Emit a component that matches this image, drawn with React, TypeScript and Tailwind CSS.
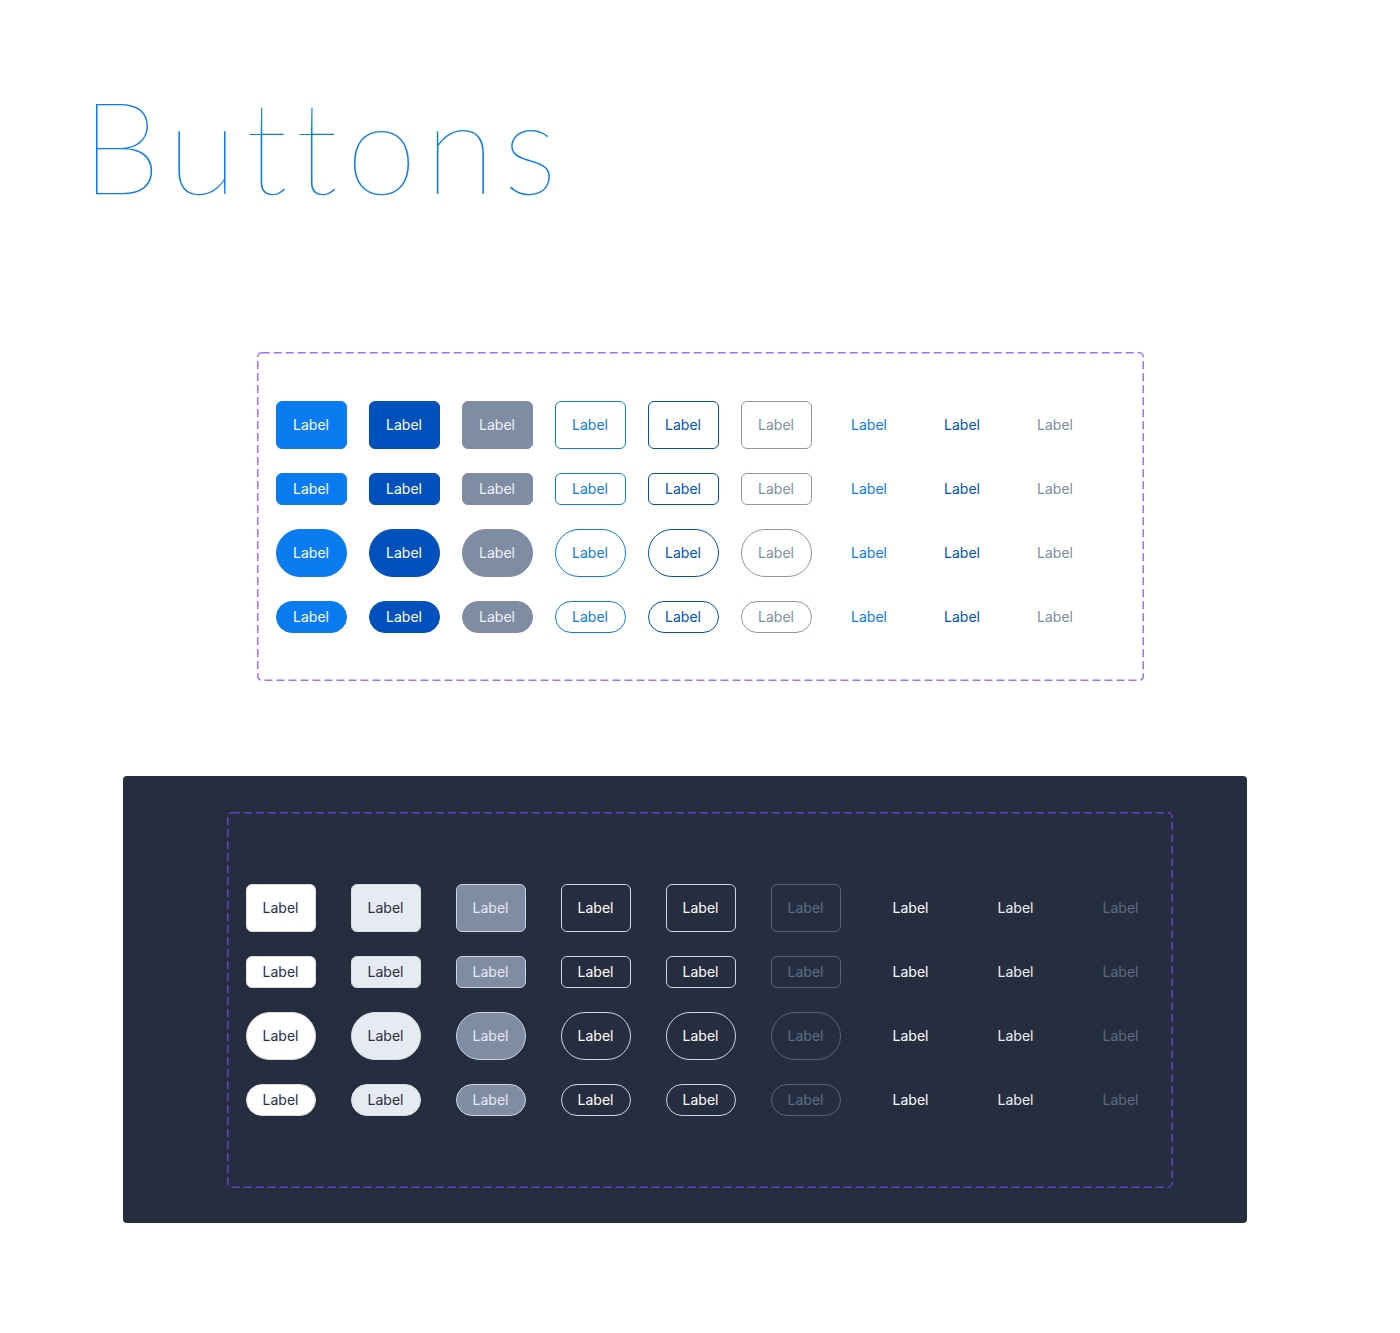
const shapes = [
  "h-12 rounded-md",
  "h-8 rounded-md",
  "h-12 rounded-full",
  "h-8 rounded-full",
];

const lightVariants = [
  "bg-[#0a7cf0] text-white border border-[#0a7cf0]",
  "bg-[#0050bd] text-white border border-[#0050bd]",
  "bg-[#7f8ca4] text-[#eef1f5] border border-[#7f8ca4]",
  "bg-white text-[#0a7cf0] border border-[#0a7cf0]",
  "bg-white text-[#0050bd] border border-[#0050bd]",
  "bg-white text-[#7f8ca4] border border-[#8b97ad]",
  "text-[#0a7cf0]",
  "text-[#0050bd]",
  "text-[#7f8ca4]",
];

const darkVariants = [
  "bg-white text-[#252e3f] border border-[#d9dde4]",
  "bg-[#e6eaf1] text-[#252e3f] border border-[#d9dde4]",
  "bg-[#7f8ca4] text-[#e6eaf1] border border-[#cfd5df]",
  "text-white border border-[#cfd5df]",
  "text-white border border-[#cfd5df]",
  "text-[#5f6c84] border border-[#56637a]",
  "text-white",
  "text-[#eef1f5]",
  "text-[#5f6c84]",
];

function ButtonGrid({ variants, colWidth, gap }: { variants: string[]; colWidth: string; gap: string }) {
  return (
    <div className="flex flex-col gap-6">
      {shapes.map((shape, r) => (
        <div key={r} className={`flex ${gap}`}>
          {variants.map((v, c) => (
            <div
              key={c}
              className={`${colWidth} ${shape} ${v} flex items-center justify-center pb-px pr-px text-[14px] box-border`}
            >
              Label
            </div>
          ))}
        </div>
      ))}
    </div>
  );
}

// dashed frame drawn like a design-tool component outline
function DashedFrame({ color }: { color: string }) {
  return (
    <svg className="absolute inset-0 w-full h-full pointer-events-none overflow-visible">
      <rect
        x="0.75"
        y="0.75"
        width="calc(100% - 1.5px)"
        height="calc(100% - 1.5px)"
        rx="4"
        fill="none"
        stroke={color}
        strokeWidth="1.5"
        strokeDasharray="8 4"
      />
    </svg>
  );
}

export default function App() {
  return (
    <div
      className="w-[1400px] min-h-[1333px] bg-white flex flex-col items-start"
      style={{ fontFamily: "Inter, 'Liberation Sans', sans-serif" }}
    >
      <h1
        className="ml-[81px] mt-[80px] h-[128px] text-[129px] leading-none font-extralight text-[#0a7cf0] tracking-[8px]"
        style={{ fontFamily: "Lato, Inter, sans-serif" }}
      >
        Buttons
      </h1>

      {/* light set */}
      <div className="relative ml-[257px] mt-[144px] w-[887px] rounded-[4px] pl-[19px] pt-[49px] pb-[48px]">
        <DashedFrame color="#a46dff" />
        <ButtonGrid variants={lightVariants} colWidth="w-[71px]" gap="gap-[22px]" />
      </div>

      {/* dark set */}
      <div className="ml-[123px] mt-[95px] w-[1124px] h-[447px] bg-[#252e3f] rounded-[4px] pl-[104px] pt-[36px]">
        <div className="relative w-[946px] rounded-[4px] pl-[19px] pt-[72px] pb-[72px]">
          <DashedFrame color="#6b3fc4" />
          <ButtonGrid variants={darkVariants} colWidth="w-[70px]" gap="gap-[35px]" />
        </div>
      </div>
    </div>
  );
}
